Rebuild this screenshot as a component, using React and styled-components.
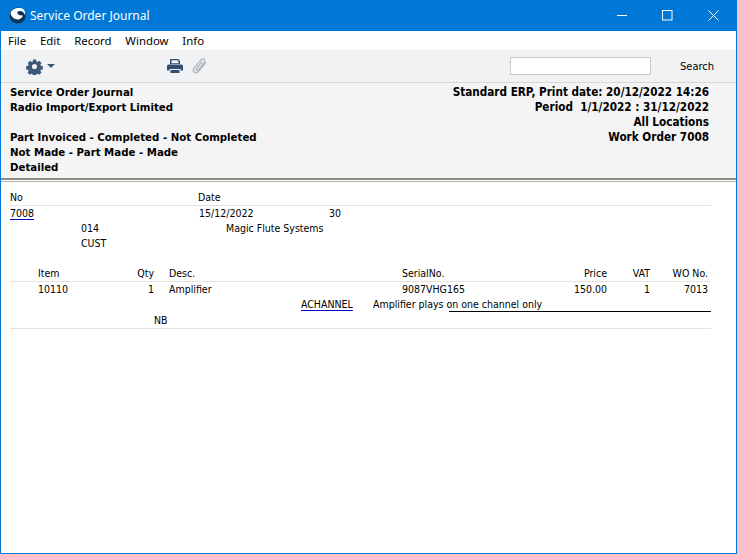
import React from "react";
import styled, { createGlobalStyle } from "styled-components";

const Global = createGlobalStyle`
  html, body { margin: 0; padding: 0; background: #fff; }
  * { box-sizing: border-box; }
  body { font-family: "DejaVu Sans", "Noto Sans", sans-serif; }
`;

const Win = styled.div`
  width: 737px; height: 554px; display: flex; flex-direction: column;
  border: 1px solid #0078d7; border-top: 0; background: #fff; color: #000;
  font-family: "DejaVu Sans", "Liberation Sans", sans-serif; font-stretch: condensed; font-size: 10.500px; overflow: hidden;
`;
const TitleBar = styled.div`
  height: 31px; margin: 0 -1px; padding: 0 1px 0 9px; background: #0078d7; color: #fff;
  display: flex; align-items: center; flex: none;
`;
const TitleText = styled.span`
  font-family: "Noto Sans", sans-serif; font-stretch: normal; font-size: 12px; margin-left: 4px; flex: 1;
`;
const WinBtn = styled.div`width: 45.500px; height: 30px; display: flex; align-items: center; justify-content: center;`;
const MenuBar = styled.div`
  height: 19px; display: flex; align-items: center; padding-left: 7px; gap: 13.800px; flex: none;
  font-family: "Noto Sans", sans-serif; font-stretch: normal; font-size: 11.400px;
`;
const Toolbar = styled.div`
  height: 33px; flex: none; background: #f1f2f4; border-bottom: 1px solid #d8d8d8;
  display: flex; align-items: center; padding-left: 25px;
`;
const GearWrap = styled.div`display: flex; align-items: center; gap: 4px; width: 141px;`;
const IconGroup = styled.div`display: flex; align-items: center; gap: 9px; width: 343px;`;
const SearchInput = styled.input`
  width: 141px; height: 18px; background: #fff; border: 1px solid #c8c8c8; margin: 0; padding: 0 3px;
`;
const SearchLabel = styled.span`margin-left: 29px; font-size: 11px;`;
const Header = styled.div`
  height: 95px; flex: none; background: #f4f4f4; padding: 2px 27px 0 9px;
  display: flex; justify-content: space-between; font-weight: 700; line-height: 15px;
`;
const HeadCol = styled.div`
  display: flex; flex-direction: column;
  text-align: ${p => p.$right ? "right" : "left"};
  font-size: ${p => p.$right ? "11.650px" : "11.350px"};
`;
const HeadLine = styled.div`height: 15px; white-space: pre;`;
const DoubleRule = styled.div`
  height: 4px; flex: none; border-top: 2px solid #8f8b85; border-bottom: 1px solid #b5b2ac; background: #fff;
`;
const Body = styled.div`flex: 1; padding: 8px 25px 0 9px; line-height: 15px;`;
const Row = styled.div`
  display: grid; grid-template-columns: ${p => p.$cols}; height: ${p => p.$h || 15}px;
  padding: ${p => p.$pt || 0}px 3px 0 ${p => p.$pl || 0}px;
  border-bottom: ${p => p.$line ? "1px solid #e6e2de" : "0"}; white-space: nowrap;
`;
const Right = styled.span`text-align: right;`;
const Link = styled.span`text-decoration: underline; text-decoration-color: #0000c8; text-underline-offset: 2px;`;
const Spacer = styled.div`height: ${p => p.$h}px;`;
const SignRow = styled.div`
  display: grid; grid-template-columns: 291px 72px 1fr; height: 15px; white-space: nowrap; position: relative;
`;
const SignLine = styled.div`position: absolute; left: 439px; right: 0; top: 14px; height: 1px; background: #000;`;

const Gear = () => (
  <svg width="17" height="17" viewBox="0 0 24 24" fill="#3c5a78">
    <path fillRule="evenodd" d="M9.500 1h5l.6 3 1.800.8 2.600-1.700 3.500 3.500-1.700 2.600.8 1.800 3 .6v5l-3 .6-.8 1.800 1.700 2.600-3.500 3.500-2.600-1.700-1.800.8-.6 3h-5l-.6-3-1.800-.8-2.600 1.700-3.500-3.500 1.700-2.600-.8-1.800-3-.6v-5l3-.6.8-1.800L1.600 6.600l3.500-3.500 2.600 1.700 1.800-.8zM12 8a4 4 0 1 0 0 8 4 4 0 0 0 0-8z" transform="translate(1.200 1.200) scale(.9)" />
  </svg>
);
const Caret = () => (
  <svg width="8" height="4" viewBox="0 0 8 4" fill="#3c5a78"><path d="M0 0h8L4 4z" /></svg>
);
const Printer = () => (
  <svg width="16" height="14" viewBox="0 0 16 14" fill="#2f4f70">
    <path fillRule="evenodd" d="M3 0h8l2 2v3H3zM1.500 5.500h13A1.500 1.500 0 0 1 16 7v4.500h-2.500V10h-11v1.500H0V7a1.500 1.500 0 0 1 1.500-1.500zM3.500 11h9v3h-9zM4.500 1.200v3h7V2.600L10.400 1.200z" />
  </svg>
);
const Clip = () => (
  <svg width="15" height="16" viewBox="0 0 15 16" fill="none" stroke="#b0b8c0" strokeWidth="1.300" strokeLinecap="round">
    <path d="M13.500 5 6.600 13.300c-1.300 1.500-3 2-4.300 1S1 11.600 2.200 10L8.600 2.300c1-1.200 2.500-1.500 3.500-.7s1 2.200 0 3.400L6.300 11.800c-.6.700-1.400.9-1.900.5s-.4-1.200.2-1.900L10 4" />
  </svg>
);
const Logo = () => (
  <svg width="17" height="17" viewBox="0 0 17 17">
    <circle cx="8.500" cy="8.500" r="8" fill="#0f3358" />
    <path d="M1.500 6C2.500 2 8 0 12.500 1.300 15.500 2.300 16.500 5 16 8c-.8-2.500-3-4.200-5.500-4-1.700.2-2.500 1.200-2 2.600.6 1.500 3.300 2.400 5.500 1.600-.8 3.200-4.500 5.200-7.700 3.800C3.500 10.900 1.800 8.500 1.500 6z" fill="#fff" />
  </svg>
);

const itemCols = "80px 36px 15px 233px 1fr 50px 43px 58px";

export default function App() {
  return (
    <Win>
      <Global />
      <TitleBar>
        <Logo />
        <TitleText>Service Order Journal</TitleText>
        <WinBtn>
          <svg width="11" height="11" viewBox="0 0 11 11"><path d="M0 5.500h10" stroke="#fff" /></svg>
        </WinBtn>
        <WinBtn>
          <svg width="11" height="11" viewBox="0 0 11 11"><rect x=".5" y=".5" width="9.500" height="9.500" fill="none" stroke="#fff" /></svg>
        </WinBtn>
        <WinBtn>
          <svg width="11" height="11" viewBox="0 0 11 11"><path d="M.5.500l10 10M10.500.500l-10 10" stroke="#fff" /></svg>
        </WinBtn>
      </TitleBar>
      <MenuBar>
        <span>File</span><span>Edit</span><span>Record</span><span>Window</span><span>Info</span>
      </MenuBar>
      <Toolbar>
        <GearWrap><Gear /><Caret /></GearWrap>
        <IconGroup><Printer /><Clip /></IconGroup>
        <SearchInput aria-label="Search" />
        <SearchLabel>Search</SearchLabel>
      </Toolbar>
      <Header>
        <HeadCol>
          <HeadLine>Service Order Journal</HeadLine>
          <HeadLine>Radio Import/Export Limited</HeadLine>
          <HeadLine> </HeadLine>
          <HeadLine>Part Invoiced - Completed - Not Completed</HeadLine>
          <HeadLine>Not Made - Part Made - Made</HeadLine>
          <HeadLine>Detailed</HeadLine>
        </HeadCol>
        <HeadCol $right>
          <HeadLine>Standard ERP, Print date: 20/12/2022 14:26</HeadLine>
          <HeadLine>Period  1/1/2022 : 31/12/2022</HeadLine>
          <HeadLine>All Locations</HeadLine>
          <HeadLine>Work Order 7008</HeadLine>
        </HeadCol>
      </Header>
      <DoubleRule />
      <Body>
        <Row $cols="188px 1fr" $line $h={16}><span>No</span><span>Date</span></Row>
        <Row $cols="189px 130px 1fr"><span><Link>7008</Link></span><span>15/12/2022</span><span>30</span></Row>
        <Row $cols="145px 1fr" $pl={71}><span>014</span><span>Magic Flute Systems</span></Row>
        <Row $cols="1fr" $pl={71}><span>CUST</span></Row>
        <Spacer $h={15} />
        <Row $cols={itemCols} $pl={28} $line $h={16}>
          <span>Item</span><Right>Qty</Right><span /><span>Desc.</span><span>SerialNo.</span>
          <Right>Price</Right><Right>VAT</Right><Right>WO No.</Right>
        </Row>
        <Row $cols={itemCols} $pl={28}>
          <span>10110</span><Right>1</Right><span /><span>Amplifier</span><span>9087VHG165</span>
          <Right>150.00</Right><Right>1</Right><Right>7013</Right>
        </Row>
        <SignRow>
          <span />
          <span><Link>ACHANNEL</Link></span>
          <span>Amplifier plays on one channel only</span>
          <SignLine />
        </SignRow>
        <Row $cols="144px 1fr" $line $pt={1} $h={17}><span /><span>NB</span></Row>
      </Body>
    </Win>
  );
}
